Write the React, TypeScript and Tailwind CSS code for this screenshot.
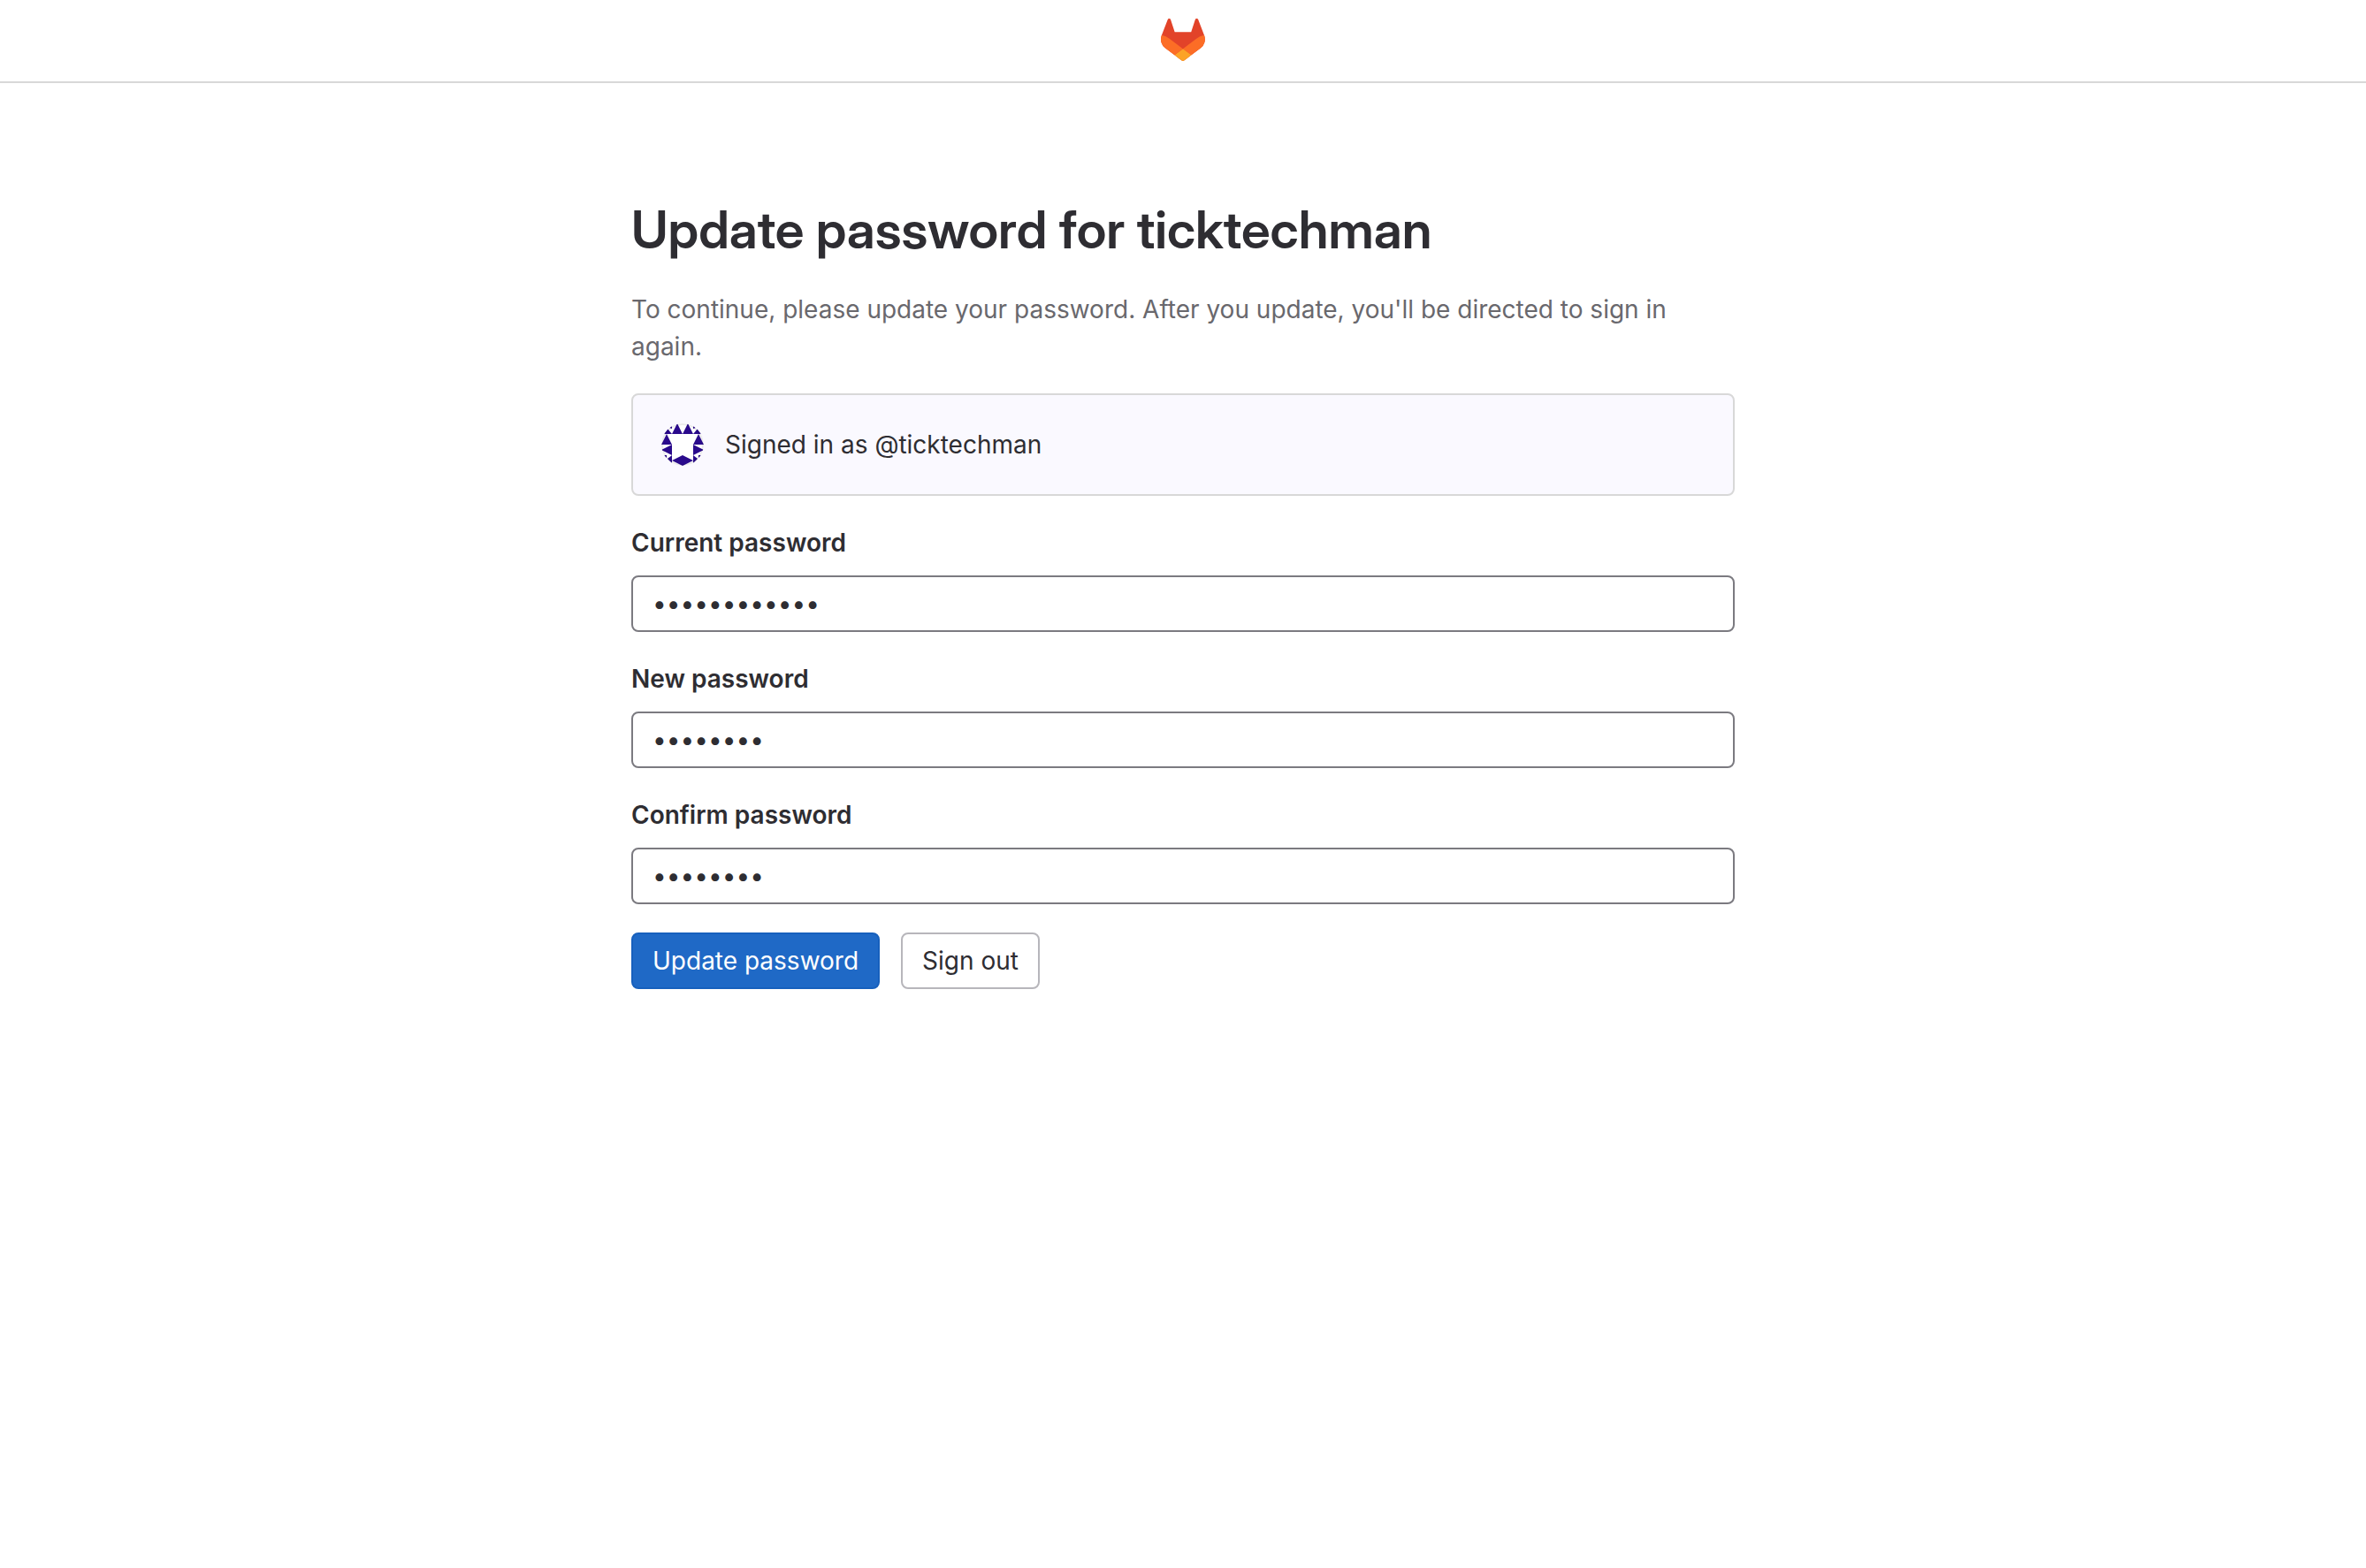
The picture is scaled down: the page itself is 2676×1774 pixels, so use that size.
import React from "react";

function TanukiLogo() {
  return (
    <svg className="block h-12 w-[50px]" viewBox="0 0 25 24" role="img" aria-label="GitLab">
      <path
        fill="#E24329"
        d="m24.507 9.5-.034-.09L21.082.562a.896.896 0 0 0-1.694.091l-2.29 7.01H7.825L5.535.653a.898.898 0 0 0-1.694-.09L.451 9.411.416 9.5a6.297 6.297 0 0 0 2.09 7.278l.012.01.03.022 5.16 3.867 2.56 1.935 1.554 1.176a1.051 1.051 0 0 0 1.268 0l1.555-1.176 2.56-1.935 5.197-3.89.014-.01A6.297 6.297 0 0 0 24.507 9.5Z"
      />
      <path
        fill="#FC6D26"
        d="m24.507 9.5-.034-.09a11.44 11.44 0 0 0-4.56 2.051l-7.447 5.632 4.742 3.584 5.197-3.89.014-.01A6.297 6.297 0 0 0 24.507 9.5Z"
      />
      <path
        fill="#FCA326"
        d="m7.707 20.677 2.56 1.935 1.555 1.176a1.051 1.051 0 0 0 1.268 0l1.555-1.176 2.56-1.935-4.743-3.584-4.755 3.584Z"
      />
      <path
        fill="#FC6D26"
        d="M5.01 11.461a11.43 11.43 0 0 0-4.56-2.05L.416 9.5a6.297 6.297 0 0 0 2.09 7.278l.012.01.03.022 5.16 3.867 4.745-3.584-7.444-5.632Z"
      />
    </svg>
  );
}

function Avatar() {
  return (
    <svg className="block size-12 rounded-full bg-white" viewBox="0 0 48 48" role="img" aria-label="ticktechman">
      <path
        fill="#2a0a8c"
        d="M12 12l6-12 6 12zM24 12l6-12 6 12zM0 24l6-12 6 12zM36 24l6-12 6 12zM12 24v12L0 30zM36 24v12l12-6zM12 42l12-6 12 6-12 6zM3 12l4-6 5 6zM36 12l5-6 4 6zM9 5l3-2v3zM39 5l-3-2v3zM12 36v9l-5-5zM36 36v9l5-5zM3 36h3v3zM45 36h-3v3z"
      />
      <circle cx="24" cy="24" r="23" fill="none" stroke="#000" strokeOpacity="0.08" strokeWidth="2" />
    </svg>
  );
}

function PasswordField({ id, label, value }: { id: string; label: string; value: string }) {
  return (
    <div>
      <label htmlFor={id} className="mb-4 block font-semibold">
        {label}
      </label>
      <input
        id={id}
        type="password"
        defaultValue={value}
        className="block h-16 w-full rounded-lg border-2 border-[#7b7a80] bg-white px-[22px] outline-none"
      />
    </div>
  );
}

export default function App() {
  return (
    <div className="min-h-screen bg-white font-['Inter',sans-serif] text-[28px] leading-[42px] text-[#2e2d32]">
      <header className="flex justify-center border-b-2 border-[#d8d8d8] pt-[21px] pb-[23px]">
        <a href="#">
          <TanukiLogo />
        </a>
      </header>
      <main className="mx-auto flex max-w-[1248px] flex-col gap-8 pt-32">
        <h1 className="font-['Inter_Display','Inter',sans-serif] text-[59px] leading-[75px] font-semibold [font-variation-settings:'opsz'_32]">
          Update password for ticktechman
        </h1>
        <p className="text-[#69686d]">
          To continue, please update your password. After you update, you'll be directed to sign in again.
        </p>
        <div className="flex items-center gap-6 rounded-lg border-2 border-[#d8d8d8] bg-[#faf9ff] p-8">
          <Avatar />
          <span>Signed in as @ticktechman</span>
        </div>
        <form className="flex flex-col gap-8" onSubmit={(event) => event.preventDefault()}>
          <PasswordField id="current-password" label="Current password" value="xxxxxxxxxxxx" />
          <PasswordField id="new-password" label="New password" value="xxxxxxxx" />
          <PasswordField id="confirm-password" label="Confirm password" value="xxxxxxxx" />
          <div className="flex gap-6">
            <button type="submit" className="h-16 rounded-lg border-2 border-[#1760bd] bg-[#1f69c6] px-[22px] text-white">
              Update password
            </button>
            <button type="button" className="h-16 rounded-lg border-2 border-[#b7b6bb] bg-white px-[22px]">
              Sign out
            </button>
          </div>
        </form>
      </main>
    </div>
  );
}
